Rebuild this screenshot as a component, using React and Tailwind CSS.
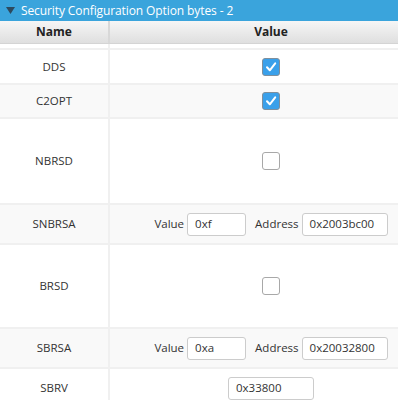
const rows = [
  { name: "DDS", h: "h-[35px]", bg: "bg-white", kind: "check", checked: true },
  { name: "C2OPT", h: "h-[34px]", bg: "bg-[#f9f9f9]", kind: "check", checked: true },
  { name: "NBRSD", h: "h-[86px]", bg: "bg-white", kind: "check", checked: false },
  { name: "SNBRSA", h: "h-[40px]", bg: "bg-[#f9f9f9]", kind: "pair", value: "0xf", address: "0x2003bc00" },
  { name: "BRSD", h: "h-[84px]", bg: "bg-white", kind: "check", checked: false },
  { name: "SBRSA", h: "h-[40px]", bg: "bg-[#f9f9f9]", kind: "pair", value: "0xa", address: "0x20032800" },
  { name: "SBRV", h: "h-[40px]", bg: "bg-white", kind: "single", value: "0x33800" },
];

function Checkbox({ checked }) {
  if (checked) {
    return (
      <div className="flex h-[18px] w-[18px] items-center justify-center rounded-[3px] border border-[#7f8f9c] bg-[#3aa0ea]">
        <svg width="12" height="12" viewBox="0 0 12 12" fill="none">
          <path d="M2 6.3 L4.8 9.3 L10.2 2.4" stroke="white" strokeWidth="2" strokeLinecap="round" strokeLinejoin="round" />
        </svg>
      </div>
    );
  }
  return <div className="h-[18px] w-[18px] rounded-[3px] border border-[#a8a8a8] bg-white" />;
}

function Field({ value, w }) {
  return (
    <div className={`flex h-[23px] ${w} items-center rounded-[3px] border border-[#cccccc] bg-white pl-[7px] text-[11.5px] text-[#333]`}>
      {value}
    </div>
  );
}

function ValueCell({ row }) {
  if (row.kind === "check") return <Checkbox checked={row.checked} />;
  if (row.kind === "single") return <Field value={row.value} w="w-[86px]" />;
  return (
    <div className="flex items-center text-[11.5px] text-[#333]">
      <span className="mr-[3px]">Value</span>
      <Field value={row.value} w="w-[59px]" />
      <span className="ml-[9px] mr-[3px]">Address</span>
      <Field value={row.address} w="w-[86px]" />
    </div>
  );
}

export default function App() {
  return (
    <div className="h-[400px] w-[398px] overflow-hidden bg-white" style={{ fontFamily: '"Open Sans", "Noto Sans", sans-serif' }}>
      <div className="w-[432px]">
        <div className="flex h-[21px] items-center bg-[#3aa4dc] pl-[6px] text-[12px] text-white">
          <svg width="9" height="7" viewBox="0 0 9 7" className="mr-[6px]">
            <path d="M0 0 H9 L4.5 7 Z" fill="#2d4a5e" />
          </svg>
          <span className="tracking-[-0.1px]">Security Configuration Option bytes - 2</span>
        </div>
        <div className="flex h-[23px] border-b border-[#d4d4d4] bg-gradient-to-b from-[#f6f6f6] to-[#dfdfdf] text-[12px] font-bold text-[#222]">
          <div className="flex w-[110px] items-center justify-center border-r-2 border-[#d8d8d8]">Name</div>
          <div className="flex flex-1 items-center justify-center">Value</div>
        </div>
        <div className="flex h-[6px] border-b-2 border-[#f0f0f0]">
          <div className="w-[110px] border-r-2 border-[#f0f0f0]" />
        </div>
        {rows.map((row) => (
          <div key={row.name} className={`flex ${row.h} ${row.bg} border-b-2 border-[#f0f0f0]`}>
            <div className="flex w-[110px] items-center justify-center border-r-2 border-[#f0f0f0] text-[11.5px] text-[#333]">
              {row.name}
            </div>
            <div className="flex flex-1 items-center justify-center">
              <ValueCell row={row} />
            </div>
          </div>
        ))}
      </div>
    </div>
  );
}
